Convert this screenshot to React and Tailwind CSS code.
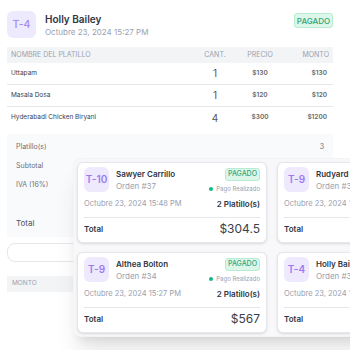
const platillos = [
  { nombre: "Uttapam", cant: 1, precio: "$130", monto: "$130" },
  { nombre: "Masala Dosa", cant: 1, precio: "$120", monto: "$120" },
  { nombre: "Hyderabadi Chicken Biryani", cant: 4, precio: "$300", monto: "$1200" },
];

const ordenes = [
  { mesa: "T-10", nombre: "Sawyer Carrillo", orden: "Orden #37", fecha: "Octubre 23, 2024 15:48 PM", platillos: "2 Platillo(s)", total: "$304.5" },
  { mesa: "T-9", nombre: "Rudyard Pacheco", orden: "Orden #36", fecha: "Octubre 23, 2024 15:45 PM", platillos: "3 Platillo(s)", total: "$512" },
  { mesa: "T-9", nombre: "Althea Bolton", orden: "Orden #34", fecha: "Octubre 23, 2024 15:27 PM", platillos: "2 Platillo(s)", total: "$567" },
  { mesa: "T-4", nombre: "Holly Bailey", orden: "Orden #33", fecha: "Octubre 23, 2024 15:27 PM", platillos: "3 Platillo(s)", total: "$1450" },
];

const Badge = ({ className = "" }) => (
  <span
    className={`inline-flex items-center justify-center rounded-[3px] border border-[#b7ecd3] bg-[#dcf7ea] text-[#33a477] font-medium ${className}`}
  >
    PAGADO
  </span>
);

const TarjetaOrden = ({ o }) => (
  <div className="w-[190px] h-[81px] bg-white rounded-md border border-gray-200 shadow-sm px-[6px] pt-[4px]">
    <div className="flex items-start justify-between">
      <div className="flex items-center">
        <div className="w-[25px] h-[25px] rounded-md bg-[#efe9fe] text-[#9b7bf0] text-[10px] font-semibold flex items-center justify-center">
          {o.mesa}
        </div>
        <div className="ml-[7px] leading-none">
          <div className="text-[8px] font-semibold text-[#2f3542] whitespace-nowrap">{o.nombre}</div>
          <div className="text-[8px] text-gray-400 mt-[4px] whitespace-nowrap">{o.orden}</div>
        </div>
      </div>
      <div className="flex flex-col items-end mt-[1px]">
        <Badge className="w-[35px] h-[13px] text-[7px]" />
        <div className="flex items-center mt-[3px] text-[6px] text-gray-400 whitespace-nowrap">
          <span className="w-[4px] h-[4px] rounded-full bg-[#10b981] mr-[3px]"></span>
          Pago Realizado
        </div>
      </div>
    </div>
    <div className="mt-[5px] h-[12px] flex items-center justify-between">
      <span className="text-[7.5px] text-gray-400 whitespace-nowrap">{o.fecha}</span>
      <span className="text-[8px] font-semibold text-[#2f3542] whitespace-nowrap">{o.platillos}</span>
    </div>
    <div className="mt-[7px] border-t border-gray-200 h-[22px] flex items-center justify-between">
      <span className="text-[8px] font-semibold text-[#2f3542]">Total</span>
      <span className="text-[12px] text-[#3a404c]">{o.total}</span>
    </div>
  </div>
);

export default function App() {
  return (
    <div
      className="relative w-[350px] h-[350px] overflow-hidden bg-white"
      style={{ fontFamily: "Inter, 'Noto Sans', sans-serif" }}
    >
      {/* Detalle de la orden */}
      <div className="pl-[7px] pr-[17px] pt-[11px]">
        <div className="flex items-start justify-between">
          <div className="flex items-center">
            <div className="w-[29px] h-[27px] rounded-md bg-[#eeeafe] text-[#a58bf6] text-[10.5px] font-medium flex items-center justify-center">
              T-4
            </div>
            <div className="ml-[9px] leading-none">
              <div className="text-[10px] font-semibold text-[#2f3542]">Holly Bailey</div>
              <div className="text-[8px] text-gray-400 mt-[4px]">Octubre 23, 2024 15:27 PM</div>
            </div>
          </div>
          <Badge className="mt-[2px] w-[39px] h-[15px] text-[8px]" />
        </div>

        <div className="mt-[9px]">
          <div className="h-[16px] bg-[#f3f4f6] flex items-center text-[7px] text-gray-400 uppercase">
            <span className="flex-1 pl-[4px]">Nombre del platillo</span>
            <span className="w-[40px] text-center">Cant.</span>
            <span className="w-[50px] text-center">Precio</span>
            <span className="w-[48px] text-right pr-[4px]">Monto</span>
          </div>
          {platillos.map((p, i) => (
            <div
              key={p.nombre}
              className={`h-[22px] flex items-center ${i < platillos.length - 1 ? "border-b border-gray-200" : ""}`}
            >
              <span className="flex-1 pl-[4px] text-[6.5px] text-[#3a404c]">{p.nombre}</span>
              <span className="w-[40px] text-center text-[10px] text-[#555]">{p.cant}</span>
              <span className="w-[50px] text-center text-[6.5px] font-semibold text-[#666]">{p.precio}</span>
              <span className="w-[48px] text-right pr-[6px] text-[6.5px] font-semibold text-[#666]">{p.monto}</span>
            </div>
          ))}
        </div>

        <div className="mt-[5px] bg-[#f9fafb] px-[9px] pt-[4px] pb-[5px] text-[7px] text-gray-500">
          <div className="h-[19px] flex items-center justify-between">
            <span>Platillo(s)</span>
            <span>3</span>
          </div>
          <div className="h-[19px] flex items-center">
            <span>Subtotal</span>
          </div>
          <div className="h-[19px] flex items-center">
            <span>IVA (16%)</span>
          </div>
          <div className="mt-[18px] h-[19px] flex items-center text-[8px] text-gray-600">
            <span>Total</span>
          </div>
        </div>

        <div className="mt-[6px] h-[19px] rounded-lg border border-gray-200 bg-white"></div>

        <div className="mt-[14px] h-[16px] bg-[#f3f4f6] flex items-center pl-[5px] text-[6.5px] text-gray-400 uppercase">
          Monto
        </div>
      </div>

      {/* Panel de órdenes flotante */}
      <div className="absolute left-[73px] top-[158px] w-[420px] h-[179px] rounded-lg bg-[#f8f8fa] shadow-xl border border-gray-100 p-[3px] grid grid-cols-[190px_190px] gap-x-[10px] gap-y-[9px] content-start">
        {ordenes.map((o, i) => (
          <TarjetaOrden key={i} o={o} />
        ))}
      </div>
    </div>
  );
}
